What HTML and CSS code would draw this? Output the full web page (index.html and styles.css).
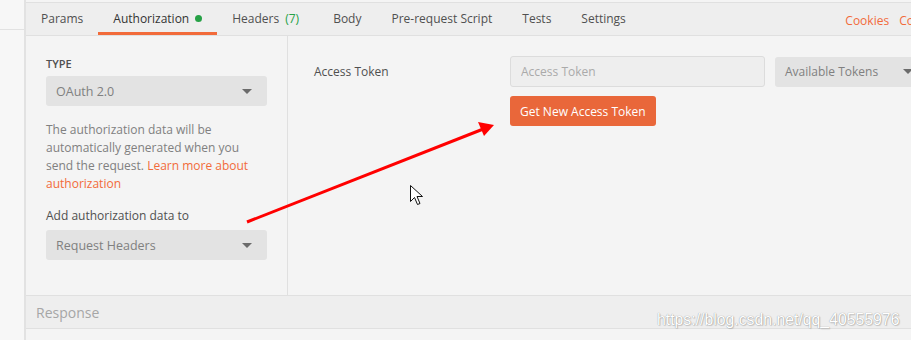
FILE: index.html
```html
<!DOCTYPE html>
<html lang="en">
  <head>
    <meta charset="UTF-8" />
    <meta name="viewport" content="width=device-width, initial-scale=1.0" />
    <title>Authorization – Postman</title>
    <link rel="stylesheet" href="styles.css">
  </head>
  <body>
    <div class="app">
      <div class="sidebar">
        <div class="sidebar-row"></div>
      </div>

      <div class="main">
        <div class="tabs">
          <div class="tab">Params</div>
          <div class="tab active">Authorization <span class="dot"></span></div>
          <div class="tab tab-headers">Headers <span class="count">(7)</span></div>
          <div class="tab">Body</div>
          <div class="tab">Pre-request Script</div>
          <div class="tab">Tests</div>
          <div class="tab">Settings</div>
          <div class="tab-links">
            <a href="#">Cookies</a>
            <a href="#">Code</a>
          </div>
        </div>

        <div class="auth">
          <div class="auth-left">
            <div class="field-title">TYPE</div>
            <div class="select">
              <span>OAuth 2.0</span>
              <span class="caret"></span>
            </div>
            <p class="help">
              The authorization data will be automatically generated when you
              send the request. <a href="#">Learn more about authorization</a>
            </p>
            <div class="field-label">Add authorization data to</div>
            <div class="select">
              <span>Request Headers</span>
              <span class="caret"></span>
            </div>
          </div>

          <div class="auth-right">
            <div class="token-row">
              <div class="token-label">Access Token</div>
              <input class="token-input" type="text" placeholder="Access Token" />
              <div class="select tokens">
                <span>Available Tokens</span>
                <span class="caret"></span>
              </div>
            </div>
            <div class="token-actions">
              <button class="btn-primary">Get New Access Token</button>
            </div>
          </div>
        </div>

        <div class="response">Response</div>
      </div>
    </div>

    <!-- annotation drawn on top of the screenshot -->
    <svg class="overlay" width="911" height="340" viewBox="0 0 911 340">
      <line x1="247" y1="222" x2="482" y2="129.5" stroke="#f00" stroke-width="3" />
      <polygon points="494,125 478,122 484,136" fill="#f00" />
      <path d="M410.5 185.5 L410.5 201.5 L414.5 197.5 L417.5 204.5 L420 203.5 L417 196.5 L422.5 196.5 Z"
            fill="#fff" stroke="#111" stroke-width="1" stroke-linejoin="miter" />
    </svg>

    <div class="watermark">https://blog.csdn.net/qq_40555976</div>
  </body>
</html>
```

FILE: styles.css
```css
body {
  margin: 0;
  width: 911px;
  height: 340px;
  overflow: hidden;
  font-family: "Open Sans", "Liberation Sans", sans-serif;
  font-size: 12px;
  color: #505050;
  background-color: #f4f4f4;
  position: relative;
}

.app {
  display: flex;
  height: 340px;
}

/* thin strip on the left */
.sidebar {
  width: 24px;
  flex: none;
  background-color: #f7f7f7;
  border-right: 2px solid #e2e2e2;
}

.sidebar-row {
  height: 29px;
  border-bottom: 1px solid #e2e2e2;
}

.main {
  flex: 1;
  min-width: 0;
  overflow: hidden;
  display: flex;
  flex-direction: column;
  padding-top: 2px;
  background-color: #f4f4f4;
}

/* tabs */
.tabs {
  display: flex;
  height: 32px;
  background-color: #eeeeee;
  border-top: 1px solid #e0e0e0;
  border-bottom: 1px solid #e0e0e0;
}

.tab {
  flex: none;
  display: flex;
  align-items: center;
  padding: 2px 15px 0;
  border-bottom: 3px solid transparent;
  box-sizing: border-box;
  height: 32px;
  white-space: nowrap;
}

.tab.active {
  color: #333;
  border-bottom-color: #f26b3a;
}

.tab-headers {
  padding-right: 19px;
}

.dot {
  display: inline-block;
  width: 7px;
  height: 7px;
  border-radius: 50%;
  background-color: #26a146;
  margin-left: 6px;
}

.count {
  color: #26a146;
  margin-left: 6px;
}

.tab-links {
  flex: none;
  margin-left: auto;
  margin-right: -17px;
  display: flex;
  align-items: center;
  gap: 10px;
  padding-top: 2px;
}

.tab-links a {
  color: #f26b3a;
  text-decoration: none;
}

/* auth body */
.auth {
  display: flex;
  height: 259px;
}

.auth-left {
  width: 262px;
  flex: none;
  box-sizing: border-box;
  padding: 20px 20px 0;
  border-right: 1px solid #e0e0e0;
}

.field-title {
  font-size: 11px;
  font-weight: 600;
  line-height: 15px;
  color: #505050;
}

.select {
  margin-top: 5px;
  height: 30px;
  box-sizing: border-box;
  background-color: #e3e3e3;
  border-radius: 3px;
  display: flex;
  align-items: center;
  justify-content: space-between;
  padding: 0 15px 0 10px;
  color: #808080;
  font-size: 12.5px;
}

.caret {
  width: 0;
  height: 0;
  border-left: 5px solid transparent;
  border-right: 5px solid transparent;
  border-top: 5px solid #6b6b6b;
}

.help {
  margin: 15px 0 0;
  line-height: 18px;
  color: #808080;
}

.help a {
  color: #f26b3a;
  text-decoration: none;
}

.field-label {
  margin-top: 14px;
  line-height: 18px;
  color: #505050;
}

.auth-right {
  flex: 1;
  min-width: 0;
  padding: 20px 0 0 26px;
}

.token-row {
  display: flex;
  align-items: center;
}

.token-label {
  width: 196px;
  flex: none;
}

.token-input {
  width: 255px;
  height: 31px;
  flex: none;
  box-sizing: border-box;
  margin: 0;
  padding: 0 10px;
  border: 1px solid #dcdcdc;
  border-radius: 3px;
  background-color: #eeeeee;
  font-family: inherit;
  font-size: 12px;
  color: #505050;
}

.token-input::placeholder {
  color: #aaaaaa;
}

.select.tokens {
  margin: 0 0 0 10px;
  width: 150px;
  flex: none;
  padding: 0 12px 0 10px;
  font-size: 12px;
}

.token-actions {
  padding-left: 196px;
  margin-top: 9px;
}

.btn-primary {
  height: 30px;
  padding: 0 10px;
  border: none;
  border-radius: 3px;
  background-color: #e9673a;
  color: #fff;
  font-family: inherit;
  font-size: 12px;
}

.response {
  height: 34px;
  display: flex;
  align-items: center;
  padding-left: 10px;
  box-sizing: border-box;
  background-color: #eeeeee;
  border-top: 1px solid #e0e0e0;
  border-bottom: 1px solid #e0e0e0;
  color: #a6a6a6;
  font-size: 14px;
}

/* overlays */
.overlay {
  position: absolute;
  left: 0;
  top: 0;
  pointer-events: none;
}

.watermark {
  position: absolute;
  left: 657px;
  top: 311px;
  font-family: "Liberation Sans", Arial, sans-serif;
  font-size: 15.8px;
  color: #ffffff;
  text-shadow: 0 0 1px rgba(0, 0, 0, 0.45), 1px 1px 1px rgba(0, 0, 0, 0.15);
  white-space: nowrap;
}
```
